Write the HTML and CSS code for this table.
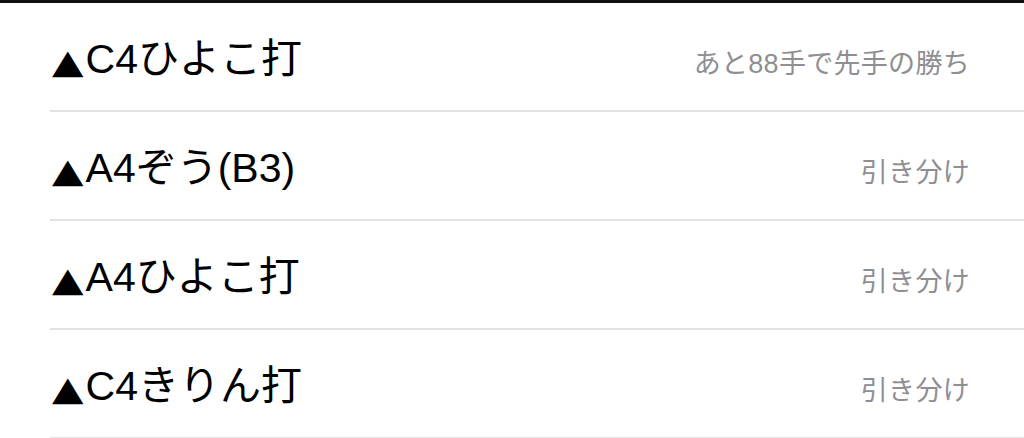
FILE: index.html
```html
<!DOCTYPE html>
<html lang="ja">
<head>
    <meta charset="UTF-8">
    <meta name="viewport" content="width=device-width, initial-scale=1.0">
    <title>読み筋</title>
    <link rel="stylesheet" href="styles.css">
</head>
<body>
    <ul class="moves">
        <li class="move">
            <span class="move-name"><span class="mark">▲</span>C4ひよこ打</span>
            <span class="move-result">あと88手で先手の勝ち</span>
        </li>
        <li class="move">
            <span class="move-name"><span class="mark">▲</span>A4ぞう(B3)</span>
            <span class="move-result">引き分け</span>
        </li>
        <li class="move">
            <span class="move-name"><span class="mark">▲</span>A4ひよこ打</span>
            <span class="move-result">引き分け</span>
        </li>
        <li class="move">
            <span class="move-name"><span class="mark">▲</span>C4きりん打</span>
            <span class="move-result">引き分け</span>
        </li>
    </ul>
</body>
</html>
```

FILE: styles.css
```css
body {
    margin: 0;
    background-color: #fff;
    font-family: "Liberation Sans", "Noto Sans CJK JP", sans-serif;
    overflow: hidden;
}

.moves {
    list-style: none;
    margin: 0;
    padding: 0;
    border-top: 3px solid #111;
}

.move {
    display: flex;
    justify-content: space-between;
    align-items: baseline;
    height: 101px;
    margin-left: 50px;
    padding: 6px 54px 0 2px;
    border-bottom: 2px solid #e3e3e3;
    line-height: 101px;
}

.move-name {
    font-size: 41px;
    color: #000;
}

.mark {
    display: inline-block;
    line-height: 1;
    font-family: "DejaVu Sans", sans-serif;
    transform: scaleY(0.82);
    transform-origin: 50% 84%;
    margin-right: 2px;
}

.move-result {
    font-size: 27px;
    letter-spacing: 0.3px;
    color: #8e8e93;
}
```
